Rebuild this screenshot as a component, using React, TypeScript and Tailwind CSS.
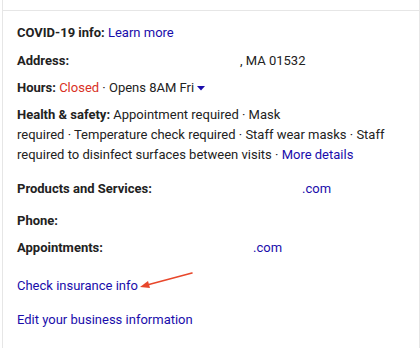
import React from "react";

const linkCls = "text-[#1a0dab]";

function Row({ className, children }: { className: string; children: React.ReactNode }) {
  return <div className={`leading-[20px] ${className}`}>{children}</div>;
}

export default function App() {
  return (
    <div className="w-[420px] h-[348px] bg-white overflow-hidden font-['Roboto',_'Liberation_Sans',_sans-serif] text-[13px] text-[#222]">
      <div className="ml-[2px] w-[418px] h-[348px] border-x border-[#e6e6e6]">
        <div className="h-[10px]" />
        <div className="border-t border-[#e6e6e6] pl-[14px] pr-[10px]">
          <Row className="mt-[12px]">
            <span className="font-bold">COVID-19 info: </span>
            <a className={linkCls}>Learn more</a>
          </Row>

          <Row className="mt-[8px] flex">
            <span className="font-bold w-[223px]">Address:</span>
            <span>, MA 01532</span>
          </Row>

          <Row className="mt-[7px] flex items-center">
            <span className="font-bold">Hours:&nbsp;</span>
            <span className="text-[#d93025]">Closed</span>
            <span>&nbsp;· Opens 8AM Fri</span>
            <svg width="8" height="5" viewBox="0 0 8 5" className="ml-[3px]">
              <path d="M0 0 L8 0 L4 4.5 Z" fill="#1a0dab" />
            </svg>
          </Row>

          <Row className="mt-[7px] whitespace-nowrap">
            <span className="font-bold">Health &amp; safety: </span>
            Appointment required · Mask
            <br />
            required · Temperature check required · Staff wear masks · Staff
            <br />
            required to disinfect surfaces between visits · <a className={linkCls}>More details</a>
          </Row>

          <Row className="mt-[14px] flex">
            <span className="font-bold w-[285px]">Products and Services:</span>
            <a className={linkCls}>.com</a>
          </Row>

          <Row className="mt-[12px]">
            <span className="font-bold">Phone:</span>
          </Row>

          <Row className="mt-[7px] flex">
            <span className="font-bold w-[236px]">Appointments:</span>
            <a className={linkCls}>.com</a>
          </Row>

          <Row className="mt-[18px] relative">
            <a className={linkCls}>Check insurance info</a>
            <svg
              width="60"
              height="24"
              viewBox="0 0 60 24"
              className="absolute left-[121px] top-[-4px]"
            >
              <line x1="54" y1="1" x2="9" y2="13" stroke="#e8472b" strokeWidth="1.6" strokeLinecap="round" />
              <path d="M2 15 L10 9 L12 16 Z" fill="#e8472b" />
            </svg>
          </Row>

          <Row className="mt-[14px]">
            <a className={linkCls}>Edit your business information</a>
          </Row>
        </div>
      </div>
    </div>
  );
}
